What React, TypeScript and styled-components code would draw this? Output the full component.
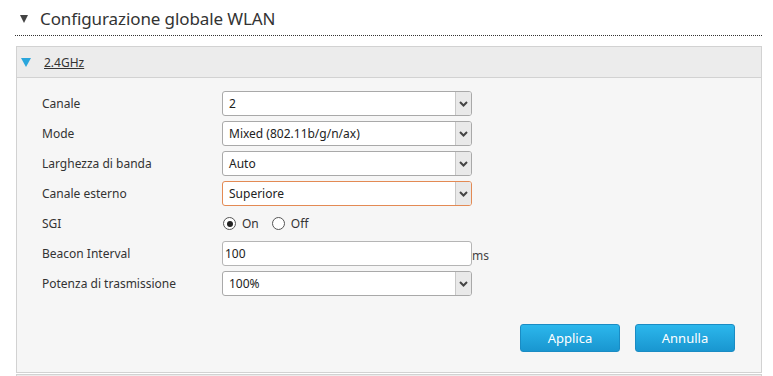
import React from 'react';
import styled, { createGlobalStyle } from 'styled-components';

const GlobalStyle = createGlobalStyle`
	html, body {
		margin: 0;
		padding: 0;
		background: #ffffff;
	}
	body {
		font-family: 'Noto Sans', 'Open Sans', sans-serif;
		color: #333333;
	}
`;

const Page = styled.div`
	width: 773px;
	height: 376px;
	overflow: hidden;
	padding: 0 11px 0 15px;
	box-sizing: border-box;
`;

const SectionTitle = styled.div`
	display: flex;
	align-items: center;
	gap: 12px;
	height: 36px;
	padding: 2px 0 0 5px;
	border-bottom: 1px dotted #333333;
	font-size: 17px;
	letter-spacing: -0.1px;
	color: #333333;
	box-sizing: border-box;
`;

const Caret = styled.span<{ color: string; size: number }>`
	display: inline-block;
	width: 0;
	height: 0;
	border-left: ${(p) => p.size * 0.6}px solid transparent;
	border-right: ${(p) => p.size * 0.6}px solid transparent;
	border-top: ${(p) => p.size}px solid ${(p) => p.color};
`;

const Panel = styled.div`
	margin: 10px 0 0 1px;
	border: 1px solid #d2d2d2;
	background: #f6f6f6;
`;

const PanelHeader = styled.div`
	display: flex;
	align-items: center;
	gap: 13px;
	height: 30px;
	padding-left: 4px;
	background: #ececec;
	border-bottom: 1px solid #d2d2d2;
	font-size: 12px;
`;

const PanelLink = styled.a`
	color: #333333;
	text-decoration: underline;
`;

const PanelBody = styled.div`
	padding: 13px 25px 20px 25px;
`;

const Form = styled.div`
	display: grid;
	grid-template-columns: 180px 250px auto;
	grid-auto-rows: 25px;
	row-gap: 5px;
	align-items: center;
	font-size: 12px;
`;

const Label = styled.div`
	color: #333333;
`;

const SelectBox = styled.div<{ focused?: boolean }>`
	display: flex;
	align-items: stretch;
	height: 25px;
	box-sizing: border-box;
	border: 1px solid ${(p) => (p.focused ? '#e38a54' : '#a9a9a9')};
	border-radius: 3px;
	background: #ffffff;
	overflow: hidden;
`;

const SelectValue = styled.div`
	flex: 1;
	display: flex;
	align-items: center;
	padding-left: 6px;
	font-size: 12px;
	color: #222222;
`;

const SelectArrow = styled.div`
	width: 15px;
	display: flex;
	align-items: center;
	justify-content: center;
	background: #e9e9e9;
	border-left: 1px solid #c8c8c8;
`;

const TextInput = styled.div`
	height: 25px;
	box-sizing: border-box;
	border: 1px solid #b5b5b5;
	border-radius: 3px;
	background: #ffffff;
	display: flex;
	align-items: center;
	padding-left: 2px;
	font-size: 12px;
	color: #222222;
`;

const Unit = styled.span`
	font-size: 12px;
	color: #444444;
	padding-top: 4px;
`;

const RadioGroup = styled.div`
	display: flex;
	align-items: center;
	gap: 13px;
	padding-left: 1px;
`;

const RadioOption = styled.label`
	display: flex;
	align-items: center;
	gap: 6px;
	font-size: 12px;
	color: #333333;
`;

const RadioDot = styled.span<{ checked?: boolean }>`
	width: 11px;
	height: 11px;
	border-radius: 50%;
	border: 1px solid #555555;
	background: #ffffff;
	display: flex;
	align-items: center;
	justify-content: center;
	&::after {
		content: '';
		width: 6px;
		height: 6px;
		border-radius: 50%;
		background: ${(p) => (p.checked ? '#222222' : 'transparent')};
	}
`;

const Actions = styled.div`
	display: flex;
	justify-content: flex-end;
	gap: 15px;
	margin-top: 28px;
	padding-right: 1px;
`;

const Button = styled.button`
	width: 100px;
	height: 28px;
	border: 1px solid #1a8cc4;
	border-radius: 3px;
	background: linear-gradient(#2cb7ec, #1996d0);
	color: #ffffff;
	font-family: 'Noto Sans', 'Open Sans', sans-serif;
	font-size: 13px;
	cursor: pointer;
`;

const NextPanel = styled.div`
	margin: 1px 0 0 1px;
	height: 10px;
	background: #ececec;
	border: 1px solid #d2d2d2;
`;

const Chevron = () => (
	<svg width="9" height="6" viewBox="0 0 9 6">
		<path d="M1 1 L4.5 4.5 L8 1" fill="none" stroke="#444" strokeWidth="2" />
	</svg>
);

const Select = ({ value, focused }: { value: string; focused?: boolean }) => (
	<SelectBox focused={focused}>
		<SelectValue>{value}</SelectValue>
		<SelectArrow>
			<Chevron />
		</SelectArrow>
	</SelectBox>
);

const App: React.FC = () => {
	return (
		<Page>
			<GlobalStyle />
			<SectionTitle>
				<Caret color="#444444" size={8} />
				<span>Configurazione globale WLAN</span>
			</SectionTitle>
			<Panel>
				<PanelHeader>
					<Caret color="#2aa6dc" size={9} />
					<PanelLink>2.4GHz</PanelLink>
				</PanelHeader>
				<PanelBody>
					<Form>
						<Label>Canale</Label>
						<Select value="2" />
						<span />
						<Label>Mode</Label>
						<Select value="Mixed (802.11b/g/n/ax)" />
						<span />
						<Label>Larghezza di banda</Label>
						<Select value="Auto" />
						<span />
						<Label>Canale esterno</Label>
						<Select value="Superiore" focused />
						<span />
						<Label>SGI</Label>
						<RadioGroup>
							<RadioOption>
								<RadioDot checked />
								On
							</RadioOption>
							<RadioOption>
								<RadioDot />
								Off
							</RadioOption>
						</RadioGroup>
						<span />
						<Label>Beacon Interval</Label>
						<TextInput>100</TextInput>
						<Unit>ms</Unit>
						<Label>Potenza di trasmissione</Label>
						<Select value="100%" />
						<span />
					</Form>
					<Actions>
						<Button>Applica</Button>
						<Button>Annulla</Button>
					</Actions>
				</PanelBody>
			</Panel>
			<NextPanel />
		</Page>
	);
};

export default App;
